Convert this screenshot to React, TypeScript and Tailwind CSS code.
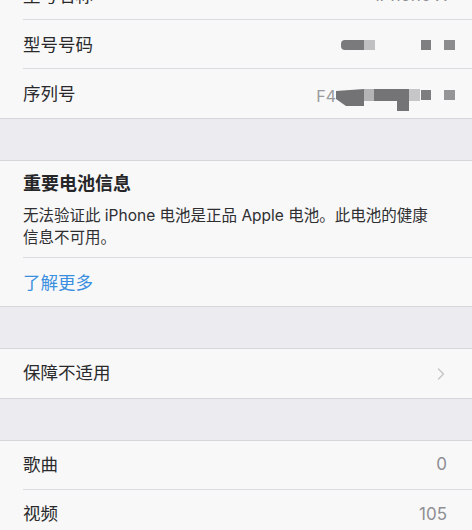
import { ChevronRight } from "lucide-react";

const font = {
  fontFamily: '"Inter", "Noto Sans CJK SC", sans-serif',
};

function Row({
  label,
  value,
  last,
  chevron,
  low,
}: {
  label: string;
  value?: React.ReactNode;
  last?: boolean;
  chevron?: boolean;
  low?: boolean;
}) {
  return (
    <div className="pl-[23px]">
      <div
        className={
          "flex h-[49px] items-center justify-between " +
          (low ? "pt-[2px] " : "") +
          (chevron ? "pr-[21px] " : "pr-[25px] ") +
          (last ? "" : "border-b border-[#dcdce0]")
        }
      >
        <span className="text-[17.5px] text-[#2a2a2c]">{label}</span>
        {chevron ? (
          <ChevronRight className="h-5 w-5 text-[#c4c4c8]" strokeWidth={1.6} />
        ) : (
          <span className="text-[17px] text-[#8e8e93]">{value}</span>
        )}
      </div>
    </div>
  );
}

// blurred / mosaic values as they appear in the screenshot
function ModelBlur() {
  return (
    <span className="mr-[-8px] flex items-center">
      <span className="h-[10px] w-[23px] rounded-l-[4px] bg-[#7a7a7c]" />
      <span className="h-[10px] w-[11px] bg-[#c0c0c2]" />
      <span className="ml-[46px] h-[10px] w-[10px] bg-[#7f7f81]" />
      <span className="ml-[13px] h-[10px] w-[11px] bg-[#8c8c8e]" />
    </span>
  );
}

function SerialBlur() {
  return (
    <span className="mr-[-8px] flex items-center">
      <span className="mt-[2px] text-[16px] text-[#9a9a9e]">F4</span>
      <svg width="84" height="22" viewBox="0 0 84 22" className="mt-[10px]">
        <path d="M0 2 L28 0 L28 17 L10 17 L0 10 Z" fill="#737375" />
        <rect x="28" y="0" width="10" height="12" fill="#b4b4b6" />
        <rect x="38" y="0" width="23" height="12" fill="#747476" />
        <rect x="61" y="0" width="12" height="22" fill="#747476" />
        <rect x="73" y="0" width="11" height="12" fill="#c6c6c8" />
      </svg>
      <span className="ml-[1px] h-[10px] w-[10px] bg-[#7d7d7f]" />
      <span className="ml-[13px] h-[10px] w-[11px] bg-[#959597]" />
    </span>
  );
}

export default function App() {
  return (
    <div
      className="h-[530px] w-[472px] overflow-hidden bg-[#ecebf0]"
      style={font}
    >
      <div className="mt-[-29px] border-b border-[#d6d6da] bg-[#f8f8f8]">
        <Row label="型号名称" value="iPhone X" low />
        <Row label="型号号码" value={<ModelBlur />} low />
        <Row label="序列号" value={<SerialBlur />} low last />
      </div>

      <div className="h-[41px]" />

      <div className="border-y border-[#d6d6da] bg-[#f8f8f8]">
        <div className="pl-[23px]">
          <div className="border-b border-[#dcdce0] pb-[8px] pr-[30px] pt-[11px]">
            <div className="text-[18px] font-bold leading-[24px] text-[#262628]">
              重要电池信息
            </div>
            <p className="mt-[9px] text-[15.5px] leading-[22px] text-[#2f2f31]">
              无法验证此 iPhone 电池是正品 Apple 电池。此电池的健康信息不可用。
            </p>
          </div>
          <div className="flex h-[48px] items-center pt-[3px]">
            <span className="text-[17.5px] text-[#3b8fe0]">了解更多</span>
          </div>
        </div>
      </div>

      <div className="h-[41px]" />

      <div className="border-y border-[#d6d6da] bg-[#f8f8f8]">
        <Row label="保障不适用" chevron last />
      </div>

      <div className="h-[41px]" />

      <div className="border-t border-[#d6d6da] bg-[#f8f8f8]">
        <Row label="歌曲" value="0" />
        <Row label="视频" value="105" last />
      </div>
    </div>
  );
}
